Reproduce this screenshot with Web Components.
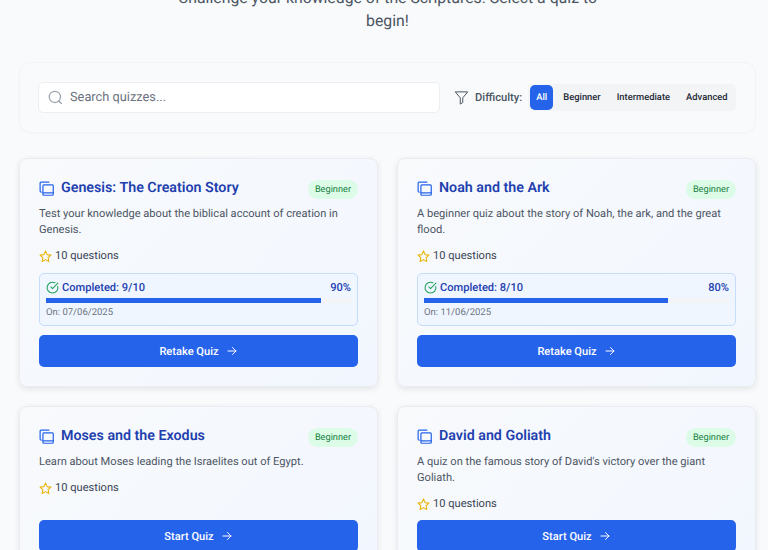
<!DOCTYPE html>
<html lang="en">
<head>
<meta charset="utf-8">
<title>Quizzes</title>
<style>
  html, body { margin: 0; height: 550px; overflow: hidden; background: #f9fafb; }
  body { font-family: Roboto, "Liberation Sans", sans-serif; text-rendering: geometricPrecision; }
</style>
</head>
<body>
<quiz-page>
  <p slot="intro">Challenge your knowledge of the Scriptures. Select a quiz to begin!</p>
  <quiz-filters slot="filters"></quiz-filters>
  <quiz-card title="Genesis: The Creation Story" questions="10" score="9" date="07/06/2025">Test your knowledge about the biblical account of creation in Genesis.</quiz-card>
  <quiz-card title="Noah and the Ark" questions="10" score="8" date="11/06/2025">A beginner quiz about the story of Noah, the ark, and the great flood.</quiz-card>
  <quiz-card title="Moses and the Exodus" questions="10">Learn about Moses leading the Israelites out of Egypt.</quiz-card>
  <quiz-card title="David and Goliath" questions="10">A quiz on the famous story of David's victory over the giant Goliath.</quiz-card>
</quiz-page>

<script>
class QuizPage extends HTMLElement {
  constructor() {
    super();
    this.attachShadow({ mode: 'open' });
    this.shadowRoot.innerHTML = `
      <style>
        :host { display: block; padding: 0 12px 0 19px; margin-top: -14px; }
        ::slotted(p) {
          margin: 0 auto 30px;
          max-width: 448px;
          text-align: center;
          font-size: 15.8px;
          line-height: 23px;
          color: #4b5563;
        }
        .grid {
          display: grid;
          grid-template-columns: 359px 359px;
          gap: 19px;
          margin-top: 25px;
        }
      </style>
      <slot name="intro"></slot>
      <slot name="filters"></slot>
      <div class="grid"><slot></slot></div>
    `;
  }
}

class QuizFilters extends HTMLElement {
  constructor() {
    super();
    this.attachShadow({ mode: 'open' });
    this.shadowRoot.innerHTML = `
      <style>
        :host {
          display: flex;
          align-items: center;
          gap: 14px;
          box-sizing: border-box;
          height: 71px;
          padding: 0 18px;
          background: #f9fafb;
          border: 1px solid #f3f4f6;
          border-radius: 12px;
          box-shadow: 0 1px 2px rgba(0,0,0,0.02);
        }
        .search {
          flex: none;
          box-sizing: border-box;
          width: 402px;
          height: 31px;
          display: flex;
          align-items: center;
          gap: 7px;
          padding-left: 9px;
          background: #fff;
          border: 1px solid #eceef1;
          border-radius: 5px;
          color: #6b7280;
          font-size: 12.8px;
        }
        .search svg { flex: none; }
        .filter { display: flex; align-items: center; }
        .label { font-size: 11.2px; font-weight: 500; color: #4b5563; margin: 0 6px 0 6px; }
        .group {
          display: flex;
          align-items: center;
          height: 27px;
          padding: 0 0 0 2px;
          background: #f3f4f6;
          border-radius: 5px;
          font-size: 9.4px;
          font-weight: 500;
          color: #1f2937;
        }
        .group span { padding: 0 8px; line-height: 25px; white-space: nowrap; }
        .group .on {
          padding: 0 6px;
          margin-right: 2px;
          background: #2563eb;
          color: #fff;
          border-radius: 5px;
        }
      </style>
      <div class="search">
        <svg width="15" height="15" viewBox="0 0 24 24" fill="none" stroke="#9ca3af" stroke-width="2" stroke-linecap="round"><circle cx="11" cy="11" r="9"/><path d="M21.5 21.5 17.5 17.5"/></svg>
        <span>Search quizzes...</span>
      </div>
      <div class="filter">
        <svg width="15" height="15" viewBox="0 0 24 24" fill="none" stroke="#4b5563" stroke-width="1.6" stroke-linejoin="round"><path d="M2 3h20l-8 9.5V20l-4 2.5v-10z"/></svg>
        <span class="label">Difficulty:</span>
        <div class="group"><span class="on">All</span><span>Beginner</span><span>Intermediate</span><span>Advanced</span></div>
      </div>
    `;
  }
}

class QuizCard extends HTMLElement {
  constructor() {
    super();
    this.attachShadow({ mode: 'open' });
  }

  connectedCallback() {
    const title = this.getAttribute('title') || '';
    const questions = this.getAttribute('questions') || '';
    const score = this.getAttribute('score');
    const date = this.getAttribute('date');
    const done = score !== null;

    const progress = done ? `
      <div class="progress">
        <div class="row">
          <span class="done">
            <svg width="13" height="13" viewBox="0 0 24 24" fill="none" stroke="#22a35a" stroke-width="2" stroke-linecap="round" stroke-linejoin="round"><path d="M21.8 10.2A10 10 0 1 1 16.5 3.3"/><path d="m9 11 3 3L22 4"/></svg>
            Completed: ${score}/${questions}
          </span>
          <span>${score * 10}%</span>
        </div>
        <div class="track"><div class="bar" style="width:${score * 10}%"></div></div>
        <div class="date">On: ${date}</div>
      </div>` : '';

    this.shadowRoot.innerHTML = `
      <style>
        :host {
          display: flex;
          flex-direction: column;
          box-sizing: border-box;
          padding: 19px;
          background: linear-gradient(135deg, #f8fafc, #f2f6fe);
          border: 1px solid #e9ecf0;
          border-radius: 8px;
          box-shadow: 0 2px 6px rgba(0,0,0,0.09);
        }
        .head { display: flex; justify-content: space-between; align-items: center; height: 20px; }
        h3 {
          display: flex;
          align-items: center;
          gap: 7px;
          margin: 0;
          font-size: 14.25px;
          line-height: 20px;
          font-weight: 600;
          color: #1e40af;
        }
        h3 svg { flex: none; }
        .badge {
          padding: 0 7px;
          margin-top: 2px;
          line-height: 19px;
          border-radius: 10px;
          background: #dcfce7;
          color: #15803d;
          font-size: 9.2px;
        }
        .desc { margin: 8px 0 0; font-size: 11.1px; line-height: 16px; color: #4b5563; }
        .count {
          display: flex;
          align-items: center;
          gap: 3px;
          margin-top: 10px;
          font-size: 11.1px;
          line-height: 16px;
          color: #374151;
        }
        .progress {
          margin-top: 9px;
          padding: 6px 6px;
          height: 53px;
          box-sizing: border-box;
          background: #eff6ff;
          border: 1px solid #c5dcfb;
          border-radius: 5px;
        }
        .row {
          display: flex;
          justify-content: space-between;
          align-items: center;
          font-size: 11.1px;
          line-height: 15px;
          font-weight: 500;
          color: #1e40af;
        }
        .done { display: flex; align-items: center; gap: 3px; }
        .track { height: 5px; margin-top: 3px; background: #f3f4f6; }
        .bar { height: 100%; background: #2563eb; }
        .date { margin-top: 3px; font-size: 9.5px; line-height: 13px; color: #6b7280; }
        .cta {
          flex: none;
          height: 32px;
          display: flex;
          align-items: center;
          justify-content: center;
          gap: 7px;
          background: #2563eb;
          color: #fff;
          border-radius: 5px;
          font-size: 11.1px;
          font-weight: 500;
        }
        .progress + .cta { margin-top: 9px; }
        .spacer { flex: 1; min-height: 8px; }
      </style>
      <div class="head">
        <h3>
          <svg width="15" height="15" viewBox="0 0 16 16" fill="none" stroke="#2563eb" stroke-width="1.3" stroke-linejoin="round" stroke-linecap="round"><path d="M10.5 1.2H2.2a1 1 0 0 0-1 1v8.4M1.2 10.6c0 .8.4 1.2 1.2 1.2"/><rect x="4.2" y="4.2" width="11" height="11" rx="1"/><path d="M4.2 12.6h11"/></svg>
          ${title}
        </h3>
        <span class="badge">Beginner</span>
      </div>
      <p class="desc"><slot></slot></p>
      <div class="count">
        <svg width="13" height="13" viewBox="0 0 24 24" fill="none" stroke="#eab308" stroke-width="2" stroke-linejoin="round"><path d="M12 2l3 6.5 7 .9-5.1 4.8 1.3 7L12 17.8l-6.2 3.4 1.3-7L2 9.4l7-.9z"/></svg>
        ${questions} questions
      </div>
      ${progress || '<div class="spacer"></div>'}
      <div class="cta">${done ? 'Retake' : 'Start'} Quiz
        <svg width="12" height="12" viewBox="0 0 24 24" fill="none" stroke="#fff" stroke-width="2" stroke-linecap="round" stroke-linejoin="round"><path d="M4 12h16M13 5l7 7-7 7"/></svg>
      </div>
    `;
  }
}

customElements.define('quiz-page', QuizPage);
customElements.define('quiz-filters', QuizFilters);
customElements.define('quiz-card', QuizCard);
</script>
</body>
</html>
